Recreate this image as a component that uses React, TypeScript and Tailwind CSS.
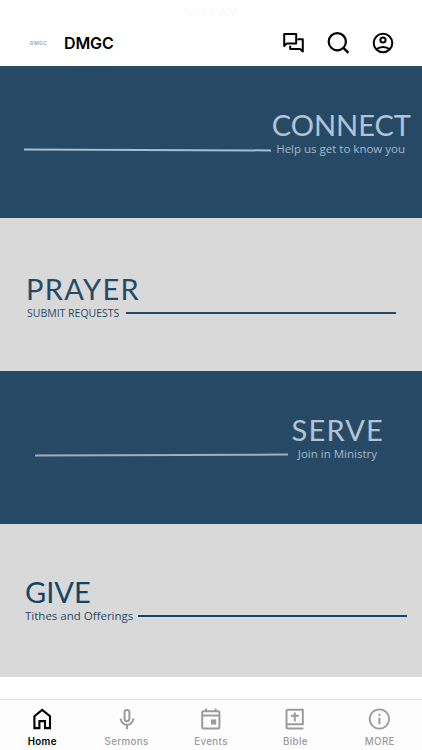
import type { ReactNode } from 'react'
import { clsx } from 'clsx'

type IconProps = { className?: string }

function Icon({ className, children }: IconProps & { children: ReactNode }) {
  return (
    <svg
      viewBox="0 0 24 24"
      fill="none"
      stroke="currentColor"
      strokeWidth={2}
      className={clsx('size-6 shrink-0', className)}
    >
      {children}
    </svg>
  )
}

const ChatIcon = () => (
  <Icon>
    <path d="M3.2 3h12v9.6H5.8l-2.6 2.4z" strokeLinejoin="round" />
    <path d="M16.4 8.3h5.4v12.1l-2.7-2.5H9.2v-3.2" strokeLinejoin="round" />
  </Icon>
)

const SearchIcon = () => (
  <Icon>
    <circle cx="11.3" cy="10.7" r="8.6" strokeWidth={2.2} />
    <path d="m17.4 16.8 5 5" strokeWidth={2.4} />
  </Icon>
)

const AccountIcon = () => (
  <Icon>
    <circle cx="12" cy="12" r="9.3" />
    <circle cx="12" cy="9" r="2.6" />
    <path d="M5.4 18.3c3.7-3.2 9.5-3.2 13.2 0" />
  </Icon>
)

const HomeIcon = () => (
  <Icon>
    <path d="M4.4 9.2 12.2 2.9l7.8 6.3v11.9h-5v-7H9.4v7h-5z" strokeWidth={2.1} />
  </Icon>
)

const MicIcon = () => (
  <Icon>
    <rect x="9.6" y="3" width="4.8" height="11.2" rx="2.4" />
    <path d="M5.7 11.6a6.3 6.3 0 0 0 12.6 0M12 17.9v4.4" />
  </Icon>
)

const EventIcon = () => (
  <Icon>
    <rect x="3.2" y="4.2" width="17.2" height="17.2" rx="1" />
    <path d="M7 1.4v3M16.6 1.4v3M3.2 8.6h17.2" />
    <path d="M12 12.4h5.2v5.2H12z" fill="currentColor" stroke="none" />
  </Icon>
)

const BibleIcon = () => (
  <Icon>
    <path d="M20.4 21.4H5a1.5 1.5 0 0 1-1.5-1.5V4.3A1.5 1.5 0 0 1 5 2.8h14.8v14.4H3.5M11.8 5.6v9M7.8 8.8h8" />
  </Icon>
)

const InfoIcon = () => (
  <Icon>
    <circle cx="11.4" cy="12" r="9.7" strokeWidth={1.8} />
    <path d="M11.4 10.8v6.4M11.4 6.8v2" />
  </Icon>
)

function Header() {
  return (
    <header className="flex h-[65.5px] shrink-0 flex-col bg-white">
      <div className="flex h-5 items-end justify-center font-['Inter',sans-serif] text-[11px] leading-4 tracking-[0.8px] text-[#f9f9f9]">
        10:26 AM
      </div>
      <div className="flex flex-1 items-center pl-[30px] pr-[27px]">
        <span className="w-[34px] pt-px font-['Inter',sans-serif] text-[5px] leading-none font-bold tracking-[0.4px] text-[#a3b0ba]">
          DMGC
        </span>
        <h1 className="flex-1 pt-px font-['Inter',sans-serif] text-[16px] font-semibold tracking-[-0.1px]">
          DMGC
        </h1>
        <div className="flex gap-[21px]">
          <ChatIcon />
          <SearchIcon />
          <AccountIcon />
        </div>
      </div>
    </header>
  )
}

type CardProps = {
  title: string
  subtitle: string
  dark?: boolean
  className: string
  titleClass: string
  subtitleClass: string
  lineClass: string
}

/** Full-width banner: big title, then the subtitle and a rule on one row. */
function Card({ title, subtitle, dark, className, titleClass, subtitleClass, lineClass }: CardProps) {
  return (
    <section
      className={clsx(
        'flex h-[152.75px] shrink-0 flex-col whitespace-nowrap',
        dark ? 'items-end bg-[#264a66] text-[#b4c3d4]' : 'bg-[#d9d9d9] text-[#264a66]',
        className,
      )}
    >
      <h2 className={clsx("font-['Lato',sans-serif] text-[29px] leading-8", titleClass)}>{title}</h2>
      <div className={clsx('flex w-full items-center', dark && 'flex-row-reverse')}>
        <p className={clsx("font-['Open_Sans',sans-serif] leading-4", subtitleClass)}>{subtitle}</p>
        <div className={clsx('h-[2px] shrink-0', lineClass)} />
      </div>
    </section>
  )
}

const tabs = [
  { label: 'Home', icon: <HomeIcon /> },
  { label: 'Sermons', icon: <MicIcon /> },
  { label: 'Events', icon: <EventIcon /> },
  { label: 'Bible', icon: <BibleIcon /> },
  { label: 'MORE', icon: <InfoIcon /> },
]

function TabBar() {
  return (
    <nav className="mt-auto flex h-[51px] shrink-0 border-t border-[#e2e2e2] bg-[#fdfdfd]">
      {tabs.map((tab, i) => (
        <button
          key={tab.label}
          className={clsx(
            "flex flex-1 flex-col items-center pt-[7px] font-['Inter',sans-serif] text-[9.75px] tracking-[0.35px]",
            i === 0 ? 'font-semibold text-black' : 'font-medium text-[#9b9b9b]',
          )}
        >
          {tab.icon}
          <span className="mt-[4px] leading-3.5">{tab.label}</span>
        </button>
      ))}
    </nav>
  )
}

export default function App() {
  return (
    <div className="flex h-screen flex-col overflow-hidden bg-white text-black">
      <Header />
      <main className="flex flex-col">
        <Card
          dark
          title="CONNECT"
          subtitle="Help us get to know you"
          className="pt-[43px]"
          titleClass="mr-[11px]"
          subtitleClass="mr-[17px] text-[11.5px] text-[#a5b8ca]"
          lineClass="mr-[5px] mt-[3px] w-[247px] rotate-[0.2deg] bg-[#a9bccb]"
        />
        <Card
          title="PRAYER"
          subtitle="SUBMIT REQUESTS"
          className="pt-[55px]"
          titleClass="ml-[26px] tracking-[1.3px]"
          subtitleClass="ml-[27px] text-[10.5px]"
          lineClass="ml-[7px] w-[270px] bg-[#264a66]"
        />
        <Card
          dark
          title="SERVE"
          subtitle="Join in Ministry"
          className="pt-[43px]"
          titleClass="mr-[38px] tracking-[1.2px]"
          subtitleClass="mr-[45px] text-[11.5px] text-[#a5b8ca]"
          lineClass="mr-[10px] mt-[2px] w-[253px] rotate-[-0.2deg] bg-[#a5adb5]"
        />
        <Card
          title="GIVE"
          subtitle="Tithes and Offerings"
          className="pt-[52px]"
          titleClass="ml-[25px] text-[#134469]"
          subtitleClass="ml-[25px] text-[11.5px]"
          lineClass="ml-[5px] w-[269px] bg-[#134469]"
        />
      </main>
      <TabBar />
    </div>
  )
}
